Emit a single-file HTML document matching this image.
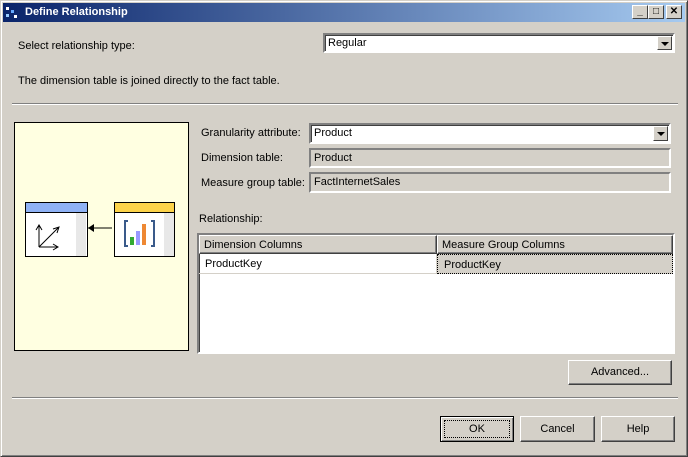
<!DOCTYPE html>
<html><head><style>
*{margin:0;padding:0;box-sizing:border-box}
body{width:688px;height:457px;background:#d4d0c8;font-family:"Liberation Sans",sans-serif;font-size:11px;color:#000;position:relative;overflow:hidden}
.a{position:absolute}
.win{left:0;top:0;width:688px;height:457px;border:1px solid;border-color:#d4d0c8 #404040 #404040 #d4d0c8;box-shadow:inset 1px 1px #fff,inset -1px -1px #808080}
.title{left:3px;top:3px;width:682px;height:19px;background:linear-gradient(90deg,#0a246a,#a6caf0);color:#fff;font-weight:bold;font-size:11px;line-height:19px;padding-left:22px}
.tb{top:5px;width:16px;height:14px;background:#d4d0c8;border:1px solid;border-color:#fff #404040 #404040 #fff;font-size:10px;text-align:center;line-height:12px;font-weight:bold}
.sunk{border:2px solid;border-color:#808080 #fff #fff #808080;box-shadow:inset 1px 1px #404040}
.white{background:#fff}
.dd{position:absolute;right:1px;top:1px;width:15px;bottom:1px;background:#d4d0c8;border:1px solid;border-color:#fff #404040 #404040 #fff}
.dd:after{content:"";position:absolute;left:3px;top:5px;border:4px solid transparent;border-top:4px solid #000;border-bottom:0}
.btn{background:#d4d0c8;border:1px solid;border-color:#fff #404040 #404040 #fff;box-shadow:inset -1px -1px #808080;text-align:center}
.sep{height:2px;border-top:1px solid #808080;border-bottom:1px solid #fff}
.t{padding-left:3px;line-height:17px}
</style></head><body>
<div class="a win"></div>
<div class="a title">Define Relationship</div>
<div class="a" style="left:6px;top:7px;width:12px;height:12px">
<div class="a" style="left:0;top:0;width:3px;height:3px;background:#fff"></div>
<div class="a" style="left:5px;top:3px;width:3px;height:3px;background:#6af"></div>
<div class="a" style="left:0;top:7px;width:3px;height:3px;background:#9cf"></div>
<div class="a" style="left:8px;top:8px;width:3px;height:3px;background:#fff"></div></div>
<div class="a tb" style="left:632px">_</div>
<div class="a tb" style="left:648px">□</div>
<div class="a tb" style="left:666px">✕</div>

<div class="a" style="left:18px;top:40px">Select relationship type:</div>
<div class="a sunk white" style="left:323px;top:33px;width:352px;height:20px"><div class="t">Regular</div><div class="dd"></div></div>
<div class="a" style="left:18px;top:75px">The dimension table is joined directly to the fact table.</div>
<div class="a sep" style="left:12px;top:103px;width:666px"></div>

<div class="a" style="left:14px;top:122px;width:175px;height:229px;background:#ffffe1;border:1px solid #000"></div>
<svg class="a" style="left:24px;top:202px" width="152" height="56">
<rect x="1.5" y="0.5" width="62" height="54" fill="#fff" stroke="#000"/>
<rect x="2" y="1" width="61" height="9" fill="#8fb2f5"/>
<line x1="2" y1="10.5" x2="63" y2="10.5" stroke="#000"/>
<rect x="52" y="11" width="10" height="43" fill="#e8e8e8"/>
<path d="M15 45V24M12 28L15 23L18 28M15 45L33 45M29 42L34 45L29 48M15 45L34 26M29 27L35 25L33 31" stroke="#000" fill="none"/>
<line x1="64" y1="26" x2="88" y2="26" stroke="#000"/><path d="M64 26L70 22V30Z"/>
<rect x="90.5" y="0.5" width="60" height="54" fill="#fff" stroke="#000"/>
<rect x="91" y="1" width="59" height="9" fill="#fcd34a"/>
<line x1="91" y1="10.5" x2="151" y2="10.5" stroke="#000"/>
<rect x="140" y="11" width="10" height="43" fill="#e8e8e8"/>
<path d="M104 19H101V44H104M127 19H130V44H127" stroke="#3a5a8a" stroke-width="2" fill="none"/>
<rect x="106" y="35" width="4" height="8" fill="#3a3"/><rect x="112" y="29" width="4" height="14" fill="#99f"/><rect x="118" y="22" width="4" height="21" fill="#e83"/>
</svg>

<div class="a" style="left:201px;top:127px">Granularity attribute:</div>
<div class="a" style="left:201px;top:152px">Dimension table:</div>
<div class="a" style="left:201px;top:177px">Measure group table:</div>
<div class="a sunk white" style="left:309px;top:123px;width:362px;height:21px"><div class="t">Product</div><div class="dd"></div></div>
<div class="a sunk" style="left:309px;top:148px;width:362px;height:20px;box-shadow:none"><div class="t">Product</div></div>
<div class="a sunk" style="left:309px;top:172px;width:362px;height:21px;box-shadow:none"><div class="t">FactInternetSales</div></div>

<div class="a" style="left:199px;top:213px">Relationship:</div>
<div class="a sunk white" style="left:197px;top:233px;width:478px;height:121px">
<div class="a btn" style="left:0;top:0;width:238px;height:19px;text-align:left;padding:3px 4px">Dimension Columns</div>
<div class="a btn" style="left:238px;top:0;width:236px;height:19px;text-align:left;padding:3px 4px">Measure Group Columns</div>
<div class="a" style="left:0;top:19px;width:238px;height:20px;border-bottom:1px solid #d4d0c8;border-right:1px solid #d4d0c8;padding:4px 6px">ProductKey</div>
<div class="a" style="left:238px;top:19px;width:236px;height:20px;background:#d4d0c8;border:1px dotted #000;padding:4px 6px">ProductKey</div>
</div>

<div class="a btn" style="left:568px;top:360px;width:104px;height:25px;line-height:23px">Advanced...</div>
<div class="a sep" style="left:12px;top:397px;width:666px"></div>
<div class="a btn" style="left:440px;top:416px;width:74px;height:26px;line-height:22px;border:1px solid #000;box-shadow:inset 1px 1px #fff,inset -1px -1px #808080"><div style="margin:3px;border:1px dotted #000;line-height:16px">OK</div></div>
<div class="a btn" style="left:520px;top:416px;width:75px;height:26px;line-height:24px">Cancel</div>
<div class="a btn" style="left:601px;top:416px;width:74px;height:26px;line-height:24px">Help</div>
</body></html>
